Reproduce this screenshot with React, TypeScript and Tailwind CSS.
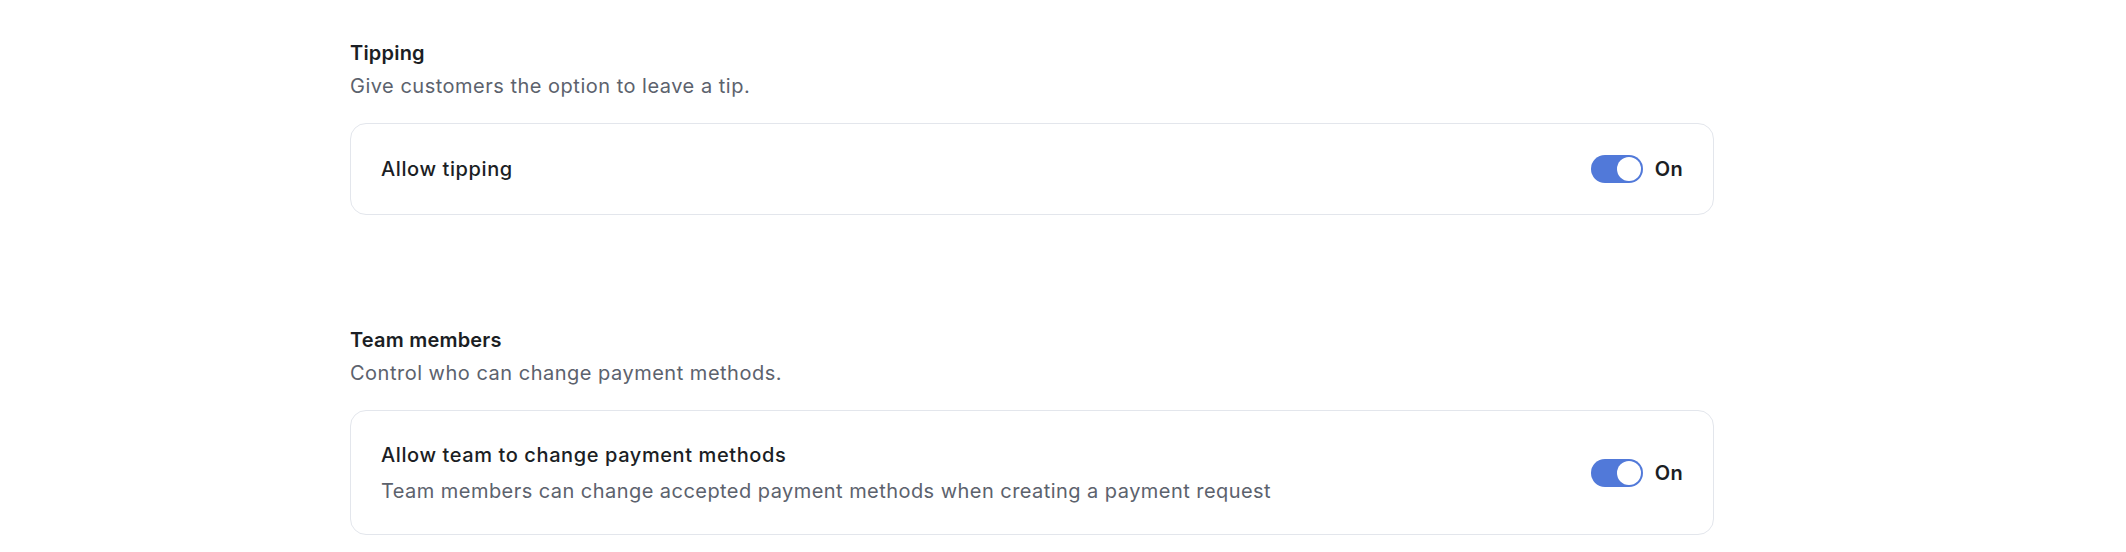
import React from 'react';

function Toggle({ on }: { on: boolean }) {
  return (
    <div className="flex items-center gap-3">
      <button
        type="button"
        className={`relative h-[28px] w-[52px] rounded-full p-[2px] flex items-center ${
          on ? 'bg-[#5179d9] justify-end' : 'bg-gray-300 justify-start'
        }`}
      >
        <span className="block h-6 w-6 rounded-full bg-white" />
      </button>
      <span className="text-[20px] leading-[30px] font-semibold tracking-[0.3px] text-[#1b1e24]">
        {on ? 'On' : 'Off'}
      </span>
    </div>
  );
}

function Section({
  title,
  subtitle,
  children,
}: {
  title: string;
  subtitle: string;
  children: React.ReactNode;
}) {
  return (
    <section>
      <h2 className="text-[20px] leading-[28px] font-semibold tracking-[0.2px] text-[#1b1e24]">{title}</h2>
      <p className="mt-[5px] text-[20px] leading-[28px] tracking-[0.5px] text-[#5c626d]">{subtitle}</p>
      <div className="mt-[23px] rounded-[16px] border border-[#e3e6ec] bg-white">
        {children}
      </div>
    </section>
  );
}

export default function App() {
  return (
    <div
      className="min-h-[552px] bg-white pt-[39px]"
      style={{ fontFamily: 'Inter, "Noto Sans", sans-serif' }}
    >
      <div className="ml-[350px] w-[1364px]">
        <Section title="Tipping" subtitle="Give customers the option to leave a tip.">
          <div className="flex items-center justify-between px-[30px] py-[30px]">
            <span className="text-[20px] leading-[30px] font-medium tracking-[0.6px] text-[#1b1e24]">
              Allow tipping
            </span>
            <Toggle on />
          </div>
        </Section>

        <div className="mt-[111px]">
          <Section title="Team members" subtitle="Control who can change payment methods.">
            <div className="flex items-center justify-between px-[30px] pt-[30px] pb-[29px]">
              <div>
                <div className="text-[20px] leading-[28px] font-medium tracking-[0.6px] text-[#1b1e24]">
                  Allow team to change payment methods
                </div>
                <div className="mt-2 text-[20px] leading-[28px] tracking-[0.45px] text-[#5c626d]">
                  Team members can change accepted payment methods when creating a payment request
                </div>
              </div>
              <Toggle on />
            </div>
          </Section>
        </div>
      </div>
    </div>
  );
}
